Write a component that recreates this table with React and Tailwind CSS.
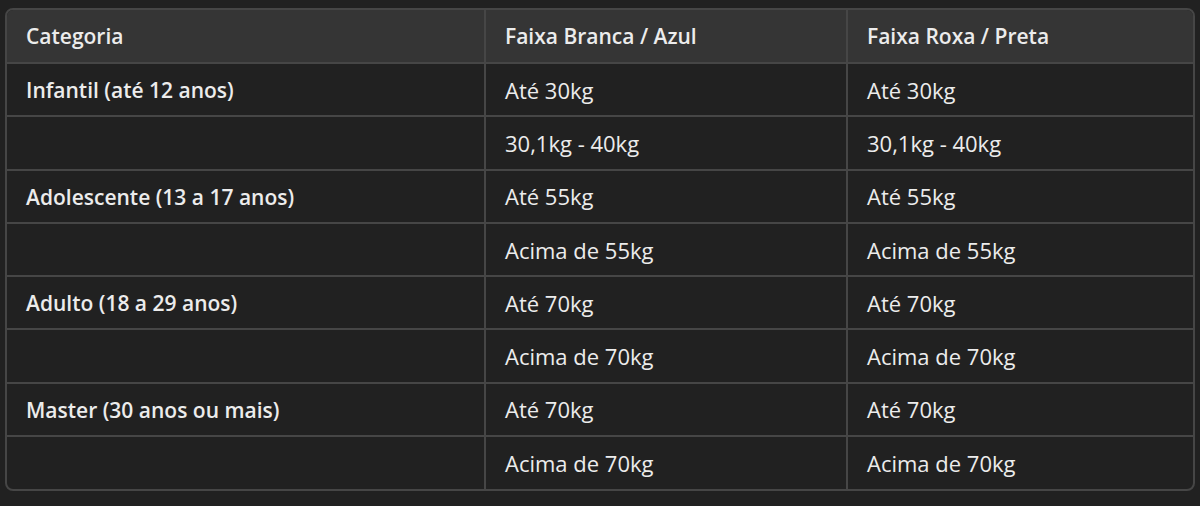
const rows = [
    ["Infantil (até 12 anos)", "Até 30kg", "Até 30kg"],
    ["", "30,1kg - 40kg", "30,1kg - 40kg"],
    ["Adolescente (13 a 17 anos)", "Até 55kg", "Até 55kg"],
    ["", "Acima de 55kg", "Acima de 55kg"],
    ["Adulto (18 a 29 anos)", "Até 70kg", "Até 70kg"],
    ["", "Acima de 70kg", "Acima de 70kg"],
    ["Master (30 anos ou mais)", "Até 70kg", "Até 70kg"],
    ["", "Acima de 70kg", "Acima de 70kg"],
];

const App = () => {
    return (
        <div
            className="w-[1200px] h-[506px] bg-[#212121] pt-[8px] pl-[5px] text-[#ececec]"
            style={{ fontFamily: '"Open Sans", "Noto Sans", sans-serif' }}
        >
            <div className="w-[1190px] border-2 border-[#464646] rounded-lg overflow-hidden">
                <table className="w-full border-collapse text-[22px] leading-[28px]">
                    <colgroup>
                        <col className="w-[478px]" />
                        <col className="w-[362px]" />
                        <col />
                    </colgroup>
                    <thead>
                        <tr className="bg-[#353535] h-[53px] text-[21px]">
                            <th className="text-left font-semibold pl-[19px] border-b-2 border-[#464646]">Categoria</th>
                            <th className="text-left font-semibold pl-[19px] border-b-2 border-l-2 border-[#464646]">Faixa Branca / Azul</th>
                            <th className="text-left font-semibold pl-[19px] border-b-2 border-l-2 border-[#464646]">Faixa Roxa / Preta</th>
                        </tr>
                    </thead>
                    <tbody>
                        {rows.map((r, i) => (
                            <tr key={i} className="h-[53.3px]">
                                <td className={`pl-[19px] font-semibold border-[#464646] ${i < rows.length - 1 ? "border-b-2" : ""}`}>
                                    <span className="text-[21px]">{r[0]}</span>
                                </td>
                                <td className={`pl-[19px] border-l-2 border-[#464646] ${i < rows.length - 1 ? "border-b-2" : ""}`}>{r[1]}</td>
                                <td className={`pl-[19px] border-l-2 border-[#464646] ${i < rows.length - 1 ? "border-b-2" : ""}`}>{r[2]}</td>
                            </tr>
                        ))}
                    </tbody>
                </table>
            </div>
        </div>
    );
};

export default App;
